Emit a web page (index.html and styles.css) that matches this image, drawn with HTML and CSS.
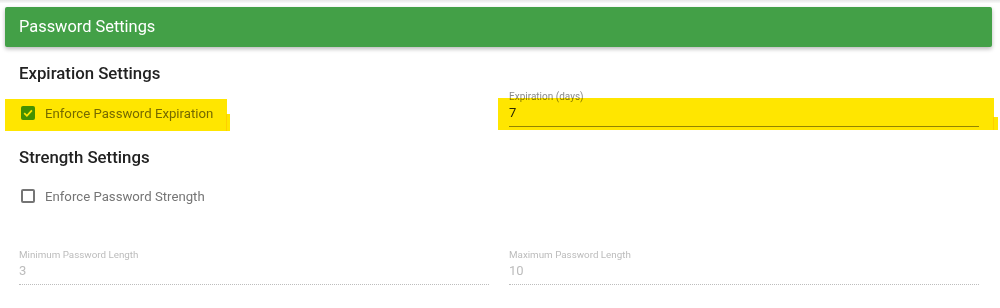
FILE: index.html
```html
<!DOCTYPE html>
<html lang="en">
<head>
  <meta charset="UTF-8">
  <meta name="viewport" content="width=device-width, initial-scale=1.0">
  <title>Password Settings</title>
  <link rel="stylesheet" href="styles.css">
</head>
<body>
  <div class="top-edge"></div>
  <div class="card">
    <div class="card-header">Password Settings</div>

    <div class="card-body">
      <h3 class="section-title">Expiration Settings</h3>
      <div class="row">
        <div class="col check-col">
          <label class="check">
            <span class="box checked">
              <svg viewBox="0 0 14 14" width="14" height="14"><path d="M3.2 7.2 L5.9 9.8 L10.9 4.4" fill="none" stroke="#fff" stroke-width="1.8"/></svg>
            </span>
            Enforce Password Expiration
          </label>
        </div>
        <div class="col">
          <div class="field">
            <span class="field-label">Expiration (days)</span>
            <span class="field-value">7</span>
          </div>
        </div>
      </div>

      <h3 class="section-title strength">Strength Settings</h3>
      <div class="row">
        <div class="col">
          <label class="check">
            <span class="box"></span>
            Enforce Password Strength
          </label>
        </div>
      </div>

      <div class="row lengths">
        <div class="col">
          <div class="field disabled">
            <span class="field-label">Minimum Password Length</span>
            <span class="field-value">3</span>
          </div>
        </div>
        <div class="col">
          <div class="field disabled">
            <span class="field-label">Maximum Password Length</span>
            <span class="field-value">10</span>
          </div>
        </div>
      </div>
    </div>
  </div>

  <!-- marker highlights drawn over the screenshot -->
  <span class="highlight hl-left"></span>
  <span class="highlight hl-left-tail"></span>
  <span class="highlight hl-right"></span>
  <span class="highlight hl-right-tail"></span>
</body>
</html>
```

FILE: styles.css
```css
body{
  margin: 0;
  background: #fff;
  font-family: Roboto, "Liberation Sans", Arial, sans-serif;
  position: relative;
  height: 308px;
  overflow: hidden;
}
.top-edge{
  height: 3px;
  background: linear-gradient(#e6e6e6, #fafafa);
}
.card{
  margin: 4px 8px 0 5px;
}
.card-header{
  height: 40px;
  line-height: 40px;
  padding-left: 14px;
  background-color: #43a047;
  color: #fff;
  font-size: 16.4px;
  border-radius: 2px;
  box-shadow: 0 2px 4px rgba(0,0,0,0.28);
}
.card-body{
  padding: 0 13px 0 14px;
}
.section-title{
  margin: 16px 0 0;
  font-size: 16.8px;
  line-height: 20px;
  font-weight: 500;
  color: #222;
}
.section-title.strength{
  margin-top: 20px;
}
.row{
  display: flex;
  gap: 20px;
  margin-top: 8px;
}
.row.lengths{
  margin-top: 44px;
}
.col{
  flex: 1;
}
.check-col{
  padding-top: 13px;
}
.check{
  display: flex;
  align-items: center;
  height: 18px;
  padding-left: 2px;
  font-size: 13.2px;
  color: #757575;
}
.strength + .row{
  margin-top: 20px;
}
.box{
  width: 14px;
  height: 14px;
  box-sizing: border-box;
  border: 2px solid #757575;
  border-radius: 2px;
  margin-right: 10px;
  display: flex;
}
.box.checked{
  border: none;
  background: #43a047;
}
.field{
  display: flex;
  flex-direction: column;
  border-bottom: 1px solid #949494;
}
.field-label{
  font-size: 10px;
  line-height: 12px;
  color: #8a8a8a;
}
.field-value{
  font-size: 13px;
  line-height: 19px;
  padding-bottom: 4px;
  color: #2b2b2b;
}
.field.disabled{
  border-bottom: 1px dotted #bdbdbd;
}
.field.disabled .field-label{
  font-size: 9.8px;
}
.field.disabled .field-label,
.field.disabled .field-value{
  color: #bcbcbc;
}
.highlight{
  position: absolute;
  background: #ffe600;
  mix-blend-mode: multiply;
}
.hl-left{
  left: 5px;
  top: 99px;
  width: 222px;
  height: 32px;
}
.hl-left-tail{
  left: 226px;
  top: 114px;
  width: 4px;
  height: 17px;
}
.hl-right{
  left: 498px;
  top: 98px;
  width: 496px;
  height: 32px;
}
.hl-right-tail{
  left: 993px;
  top: 117px;
  width: 5px;
  height: 13px;
}
```
